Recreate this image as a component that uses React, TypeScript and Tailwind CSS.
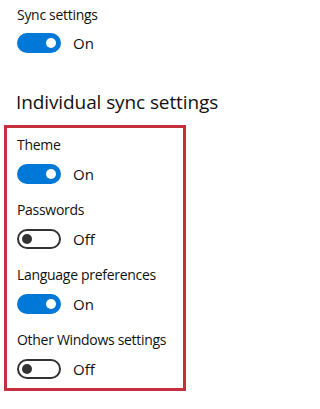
import React from 'react'

interface SyncItem {
  label: string
  on: boolean
}

const items: SyncItem[] = [
  { label: 'Theme', on: true },
  { label: 'Passwords', on: false },
  { label: 'Language preferences', on: true },
  { label: 'Other Windows settings', on: false },
]

function Toggle({ on }: { on: boolean }) {
  return (
    <div className="flex items-center gap-3 h-5">
      {on ? (
        <div className="w-11 h-5 rounded-full bg-[#0078d7] flex items-center justify-end pr-[5px]">
          <div className="w-[10px] h-[10px] rounded-full bg-white" />
        </div>
      ) : (
        <div className="w-11 h-5 rounded-full border-2 border-[#333333] flex items-center pl-[3px]">
          <div className="w-[10px] h-[10px] rounded-full bg-[#333333]" />
        </div>
      )}
      <span className="text-[15px] leading-5 text-[#111111]">{on ? 'On' : 'Off'}</span>
    </div>
  )
}

function Setting({ item }: { item: SyncItem }) {
  return (
    <div className="flex flex-col gap-[9px]">
      <span className="text-[14px] leading-5 tracking-[-0.3px] text-[#111111] whitespace-nowrap">{item.label}</span>
      <Toggle on={item.on} />
    </div>
  )
}

export default function App() {
  return (
    <div className="w-[248px] h-[409px] bg-white overflow-hidden font-['Open_Sans',sans-serif]">
      <div className="pt-[5px] pl-[17px] flex flex-col gap-2">
        <span className="text-[14px] leading-5 tracking-[-0.3px] text-[#111111]">Sync settings</span>
        <Toggle on />
      </div>
      <h2 className="mt-[35px] pl-[16px] text-[19px] leading-7 tracking-[-0.1px] text-[#111111] whitespace-nowrap">Individual sync settings</h2>
      <div className="mt-[9px] ml-1 w-[182px] h-[266px] border-[3px] border-[#c4303e] pt-[7px] pl-[10px] flex flex-col gap-4">
        {items.map((item) => (
          <Setting key={item.label} item={item} />
        ))}
      </div>
    </div>
  )
}
